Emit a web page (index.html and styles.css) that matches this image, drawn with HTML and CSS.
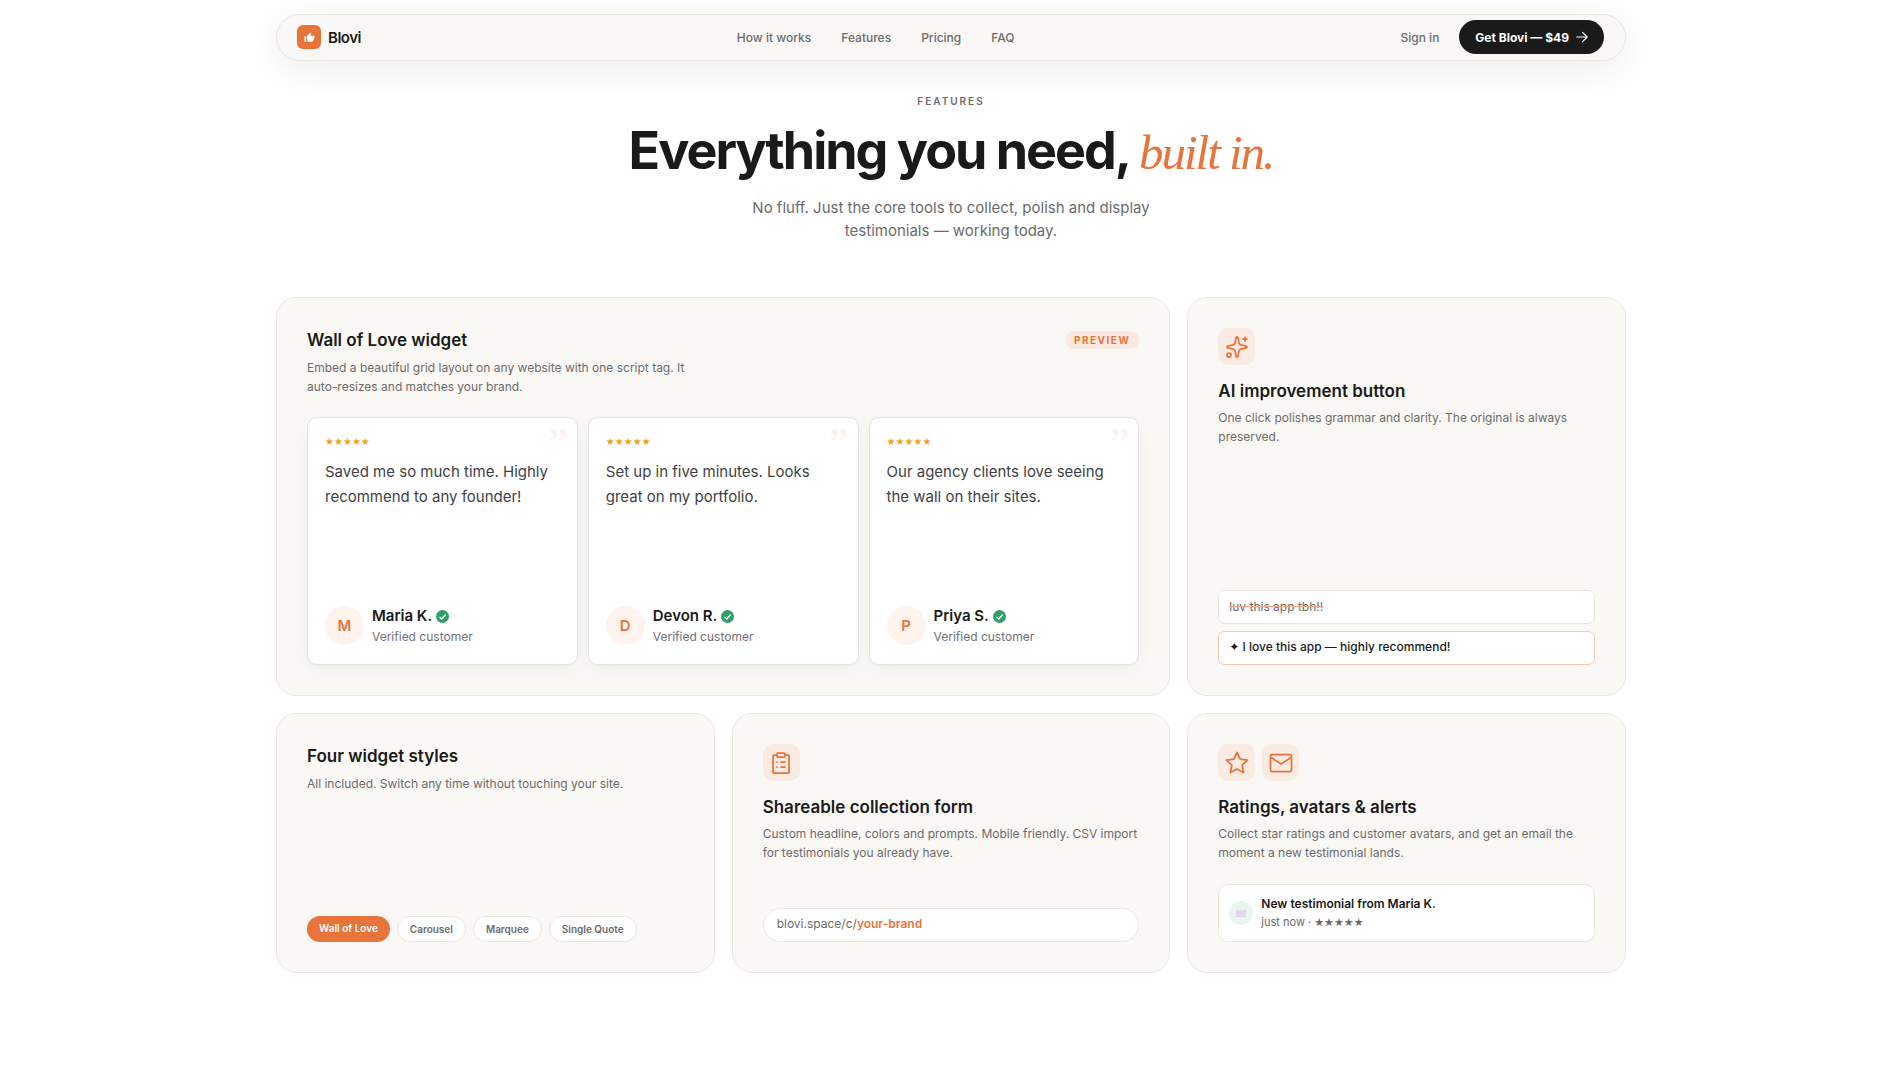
FILE: index.html
```html
<!DOCTYPE html>
<html lang="en">
<head>
    <meta charset="UTF-8">
    <meta name="viewport" content="width=device-width, initial-scale=1.0">
    <title>Blovi - Features</title>
    <link rel="stylesheet" href="styles.css">
</head>
<body>
    <div class="page">
        <header class="navbar">
            <a href="#" class="brand">
                <span class="brand-logo">
                    <svg width="11" height="11" viewBox="0 0 24 24" fill="currentColor"><path d="M1 21h4V9H1v12zm22-11c0-1.1-.9-2-2-2h-6.31l.95-4.57.03-.32c0-.41-.17-.79-.44-1.06L14.17 1 7.59 7.59C7.22 7.95 7 8.45 7 9v10c0 1.1.9 2 2 2h9c.83 0 1.54-.5 1.84-1.22l3.02-7.05c.09-.23.14-.47.14-.73v-2z"/></svg>
                </span>
                <span class="brand-name">Blovi</span>
            </a>
            <nav class="nav-links">
                <a href="#how">How it works</a>
                <a href="#features">Features</a>
                <a href="#pricing">Pricing</a>
                <a href="#faq">FAQ</a>
            </nav>
            <div class="nav-actions">
                <a href="#signin">Sign in</a>
                <a href="#buy" class="btn-buy">
                    Get Blovi — $49
                    <svg class="icon" width="14" height="14" viewBox="0 0 24 24"><path d="M3 12h18M13 4l8 8-8 8"/></svg>
                </a>
            </div>
        </header>

        <main id="features">
            <!-- Section heading -->
            <div class="section-head">
                <p class="eyebrow">Features</p>
                <h1>Everything you need, <em>built in.</em></h1>
                <p class="lead">No fluff. Just the core tools to collect, polish and display testimonials — working today.</p>
            </div>

            <div class="grid">
                <!-- Wall of Love -->
                <section class="card card-wide">
                    <div class="card-top">
                        <h2>Wall of Love widget</h2>
                        <span class="tag">Preview</span>
                    </div>
                    <p class="card-text narrow">Embed a beautiful grid layout on any website with one script tag. It auto-resizes and matches your brand.</p>
                    <div class="wall">
                        <article class="quote">
                            <span class="quote-mark">”</span>
                            <div class="stars">★★★★★</div>
                            <p class="quote-text">Saved me so much time. Highly recommend to any founder!</p>
                            <div class="author">
                                <span class="avatar">M</span>
                                <div>
                                    <div class="author-name">Maria K. <svg width="13" height="13" viewBox="0 0 24 24"><circle cx="12" cy="12" r="12" fill="#2d9d6a"/><path d="M6.500 12.500l4 4 7.500-8" fill="none" stroke="#fff" stroke-width="2.600"/></svg></div>
                                    <div class="author-role">Verified customer</div>
                                </div>
                            </div>
                        </article>
                        <article class="quote">
                            <span class="quote-mark">”</span>
                            <div class="stars">★★★★★</div>
                            <p class="quote-text">Set up in five minutes. Looks great on my portfolio.</p>
                            <div class="author">
                                <span class="avatar">D</span>
                                <div>
                                    <div class="author-name">Devon R. <svg width="13" height="13" viewBox="0 0 24 24"><circle cx="12" cy="12" r="12" fill="#2d9d6a"/><path d="M6.500 12.500l4 4 7.500-8" fill="none" stroke="#fff" stroke-width="2.600"/></svg></div>
                                    <div class="author-role">Verified customer</div>
                                </div>
                            </div>
                        </article>
                        <article class="quote">
                            <span class="quote-mark">”</span>
                            <div class="stars">★★★★★</div>
                            <p class="quote-text">Our agency clients love seeing the wall on their sites.</p>
                            <div class="author">
                                <span class="avatar">P</span>
                                <div>
                                    <div class="author-name">Priya S. <svg width="13" height="13" viewBox="0 0 24 24"><circle cx="12" cy="12" r="12" fill="#2d9d6a"/><path d="M6.500 12.500l4 4 7.500-8" fill="none" stroke="#fff" stroke-width="2.600"/></svg></div>
                                    <div class="author-role">Verified customer</div>
                                </div>
                            </div>
                        </article>
                    </div>
                </section>

                <!-- AI -->
                <section class="card">
                    <div class="icons">
                        <span class="icon-box">
                            <svg class="icon" width="24" height="24" viewBox="0 0 24 24"><path d="M11.017 2.814a1 1 0 0 1 1.966 0l1.051 5.558a2 2 0 0 0 1.594 1.594l5.558 1.051a1 1 0 0 1 0 1.966l-5.558 1.051a2 2 0 0 0-1.594 1.594l-1.051 5.558a1 1 0 0 1-1.966 0l-1.051-5.558a2 2 0 0 0-1.594-1.594l-5.558-1.051a1 1 0 0 1 0-1.966l5.558-1.051a2 2 0 0 0 1.594-1.594z"/><path d="M20 2v4M22 4h-4"/><circle cx="4" cy="20" r="2"/></svg>
                        </span>
                    </div>
                    <h2>AI improvement button</h2>
                    <p class="card-text">One click polishes grammar and clarity. The original is always preserved.</p>
                    <div class="card-bottom rewrite">
                        <p class="line before"><del>luv this app tbh!!</del></p>
                        <p class="line after">✦ I love this app — highly recommend!</p>
                    </div>
                </section>

                <!-- Widget styles -->
                <section class="card">
                    <h2>Four widget styles</h2>
                    <p class="card-text">All included. Switch any time without touching your site.</p>
                    <div class="card-bottom chips">
                        <button type="button" class="chip active">Wall of Love</button>
                        <button type="button" class="chip">Carousel</button>
                        <button type="button" class="chip">Marquee</button>
                        <button type="button" class="chip">Single Quote</button>
                    </div>
                </section>

                <!-- Collection form -->
                <section class="card">
                    <div class="icons">
                        <span class="icon-box">
                            <svg class="icon" width="24" height="24" viewBox="0 0 24 24"><rect x="8" y="2" width="8" height="4" rx="1"/><path d="M16 4h3a1 1 0 0 1 1 1v16a1 1 0 0 1-1 1H5a1 1 0 0 1-1-1V5a1 1 0 0 1 1-1h3M12 11h4M12 16h4M8 11h.01M8 16h.01"/></svg>
                        </span>
                    </div>
                    <h2>Shareable collection form</h2>
                    <p class="card-text">Custom headline, colors and prompts. Mobile friendly. CSV import for testimonials you already have.</p>
                    <div class="card-bottom url">blovi.space/c/<strong>your-brand</strong></div>
                </section>

                <!-- Ratings and alerts -->
                <section class="card">
                    <div class="icons">
                        <span class="icon-box">
                            <svg class="icon" width="24" height="24" viewBox="0 0 24 24"><path d="M12 1.500l3.200 6.600 7.300 1-5.300 5.100 1.300 7.300-6.500-3.500-6.500 3.500 1.300-7.300L1.500 9.100l7.300-1z"/></svg>
                        </span>
                        <span class="icon-box">
                            <svg class="icon" width="24" height="24" viewBox="0 0 24 24"><rect x="1.500" y="3.500" width="21" height="17" rx="1.500"/><path d="M2 6.500l10 6.500 10-6.500"/></svg>
                        </span>
                    </div>
                    <h2>Ratings, avatars &amp; alerts</h2>
                    <p class="card-text">Collect star ratings and customer avatars, and get an email the moment a new testimonial lands.</p>
                    <div class="card-bottom alert">
                        <span class="alert-icon">
                            <svg width="10" height="7" viewBox="0 0 10 7"><rect width="10" height="7" rx="1" fill="#e4daf0"/><path d="M0 1l5 3 5-3M0 6.500h10" fill="none" stroke="#d3c3e4" stroke-width="0.600"/></svg>
                        </span>
                        <div>
                            <div class="alert-title">New testimonial from Maria K.</div>
                            <div class="alert-sub">just now · <span class="alert-stars">★★★★★</span></div>
                        </div>
                    </div>
                </section>
            </div>
        </main>
    </div>
</body>
</html>
```

FILE: styles.css
```css
* {
    box-sizing: border-box;
}

body {
    margin: 0;
    background: #fff;
    color: #1a1a1a;
    font-family: Inter, "Liberation Sans", "DejaVu Sans", sans-serif;
    font-size: 12px;
    line-height: 19px;
}

h1, h2, p {
    margin: 0;
}

a {
    color: inherit;
    text-decoration: none;
}

.page {
    max-width: 1396px;
    margin: 0 auto;
    padding: 14px 20px 100px 26px;
}

.icon {
    fill: none;
    stroke: currentColor;
    stroke-width: 1.75;
    stroke-linecap: round;
    stroke-linejoin: round;
}

/* Navbar */
.navbar {
    display: flex;
    justify-content: space-between;
    align-items: center;
    padding: 5px 21px 6px 20px;
    border: 1px solid #ece6df;
    border-radius: 24px;
    background: #f9f8f6;
    box-shadow: 0 8px 40px rgba(0, 0, 0, 0.08);
    color: #6b6b6b;
    font-weight: 500;
}

.brand {
    display: flex;
    align-items: center;
    gap: 7px;
    color: #1a1a1a;
}

.brand-logo {
    display: flex;
    justify-content: center;
    align-items: center;
    width: 24px;
    height: 24px;
    border-radius: 6px;
    background: #e8743b;
    color: #fff;
}

.brand-name {
    font-size: 15px;
    font-weight: 600;
    letter-spacing: -0.5px;
}

.nav-links {
    display: flex;
    gap: 30px;
    margin-right: 10px;
}

.nav-actions {
    display: flex;
    align-items: center;
    gap: 20px;
}

.btn-buy {
    display: flex;
    align-items: center;
    gap: 6px;
    height: 34px;
    padding: 0 15px 0 16px;
    border-radius: 17px;
    background: #1a1a1a;
    color: #fff;
    font-weight: 700;
}

.btn-buy .icon {
    stroke-width: 2;
}

/* Section heading */
.section-head {
    padding: 31px 0 55px;
    text-align: center;
}

.eyebrow {
    color: #6b6b6b;
    font-size: 10px;
    font-weight: 600;
    letter-spacing: 2px;
    text-transform: uppercase;
}

h1 {
    margin: 12px 0 15px;
    font-size: 52px;
    font-weight: 700;
    line-height: 56px;
    letter-spacing: -2px;
}

h1 em {
    color: #e8743b;
    font-family: "Liberation Serif", serif;
    font-size: 49px;
    font-weight: 400;
}

.lead {
    max-width: 440px;
    margin: 0 auto;
    color: #6b6b6b;
    font-size: 15px;
    line-height: 23px;
}

/* Cards */
.grid {
    display: grid;
    grid-template-columns: repeat(3, 1fr);
    grid-template-rows: minmax(399px, auto) auto;
    gap: 17px;
}

.card {
    display: flex;
    flex-direction: column;
    padding: 30px;
    border: 1px solid #ebe7e0;
    border-radius: 20px;
    background: #faf8f5;
}

.card-wide {
    grid-column: span 2;
}

.card-top {
    display: flex;
    justify-content: space-between;
    align-items: center;
}

h2 {
    font-size: 17px;
    font-weight: 600;
    line-height: 24px;
}

.card-text {
    margin-top: 6px;
    color: #6b6b6b;
}

.icons ~ .card-text {
    margin-top: 5px;
}

.narrow {
    max-width: 380px;
}

.card-bottom {
    margin-top: auto;
}

.tag {
    padding: 0 9px;
    border-radius: 9px;
    background: #f9e9e0;
    color: #e8743b;
    font-size: 10px;
    font-weight: 700;
    line-height: 18px;
    letter-spacing: 1.5px;
    text-transform: uppercase;
}

/* Testimonials wall */
.wall {
    display: grid;
    flex: 1;
    grid-template-columns: repeat(3, 1fr);
    gap: 10px;
    margin-top: 21px;
}

.quote {
    position: relative;
    display: flex;
    flex-direction: column;
    padding: 17px 17px 18px;
    border: 1px solid #e4e4e7;
    border-radius: 10px;
    background: #fff;
    box-shadow: 0 1px 3px rgba(0, 0, 0, 0.04), 0 6px 20px rgba(0, 0, 0, 0.03);
}

.quote-mark {
    position: absolute;
    top: 4px;
    right: 9px;
    color: #fef0ea;
    font-family: "Liberation Serif", serif;
    font-size: 44px;
    line-height: 44px;
}

.stars {
    color: #f59e0b;
    font-family: "DejaVu Sans", sans-serif;
    font-size: 10px;
    line-height: 14px;
}

.quote-text {
    margin-top: 10px;
    color: #3f3f46;
    font-size: 15px;
    line-height: 25px;
}

.author {
    display: flex;
    align-items: center;
    gap: 8px;
    margin-top: auto;
}

.avatar {
    display: flex;
    justify-content: center;
    align-items: center;
    width: 39px;
    height: 39px;
    border-radius: 50%;
    background: #fff3ed;
    color: #e8743b;
    font-size: 15px;
    font-weight: 600;
}

.author-name {
    display: flex;
    align-items: center;
    gap: 4px;
    font-size: 15px;
    font-weight: 600;
    line-height: 22px;
}

.author-role {
    color: #71717a;
}

/* Icon tiles */
.icons {
    display: flex;
    gap: 7px;
    margin-bottom: 14px;
}

.icon-box {
    display: flex;
    justify-content: center;
    align-items: center;
    width: 37px;
    height: 37px;
    border-radius: 10px;
    background: #f9ebe2;
    color: #e8743b;
}

/* AI rewrite */
.rewrite {
    display: grid;
    gap: 7px;
}

.line {
    height: 34px;
    padding: 6px 10px;
    border: 1px solid #ebe7e0;
    border-radius: 7px;
    background: #fff;
}

.before {
    color: #6b6b6b;
}

.before del {
    text-decoration-color: #f0aa88;
}

.after {
    padding-top: 5px;
    border-color: #f6c7b1;
    font-weight: 500;
}

/* Style chips */
.chips {
    display: flex;
    flex-wrap: wrap;
    gap: 7px;
}

.chip {
    height: 26px;
    padding: 0 12px;
    border: 1px solid #ebe7e0;
    border-radius: 13px;
    background: #fff;
    color: #6b6b6b;
    font-family: inherit;
    font-size: 10px;
    font-weight: 600;
    cursor: pointer;
}

.chip.active {
    padding: 0 12px 3px;
    border: none;
    background: #e8743b;
    color: #fff;
}

.url {
    height: 34px;
    padding: 5px 13px;
    border: 1px solid #ebe7e0;
    border-radius: 17px;
    background: #fff;
    color: #6b6b6b;
}

.url strong {
    color: #e8743b;
    font-weight: 600;
}

/* Email alert */
.alert {
    display: flex;
    align-items: center;
    gap: 8px;
    padding: 9px 10px;
    border: 1px solid #ebe7e0;
    border-radius: 10px;
    background: #fff;
}

.card-text + .alert {
    margin-top: 22px;
}

.alert-icon {
    display: flex;
    justify-content: center;
    align-items: center;
    width: 24px;
    height: 24px;
    border-radius: 50%;
    background: #eaf5f0;
}

.alert-title {
    font-weight: 600;
}

.alert-sub {
    color: #6b6b6b;
    font-size: 11px;
}

.alert-stars {
    font-family: "DejaVu Sans", sans-serif;
}
```
